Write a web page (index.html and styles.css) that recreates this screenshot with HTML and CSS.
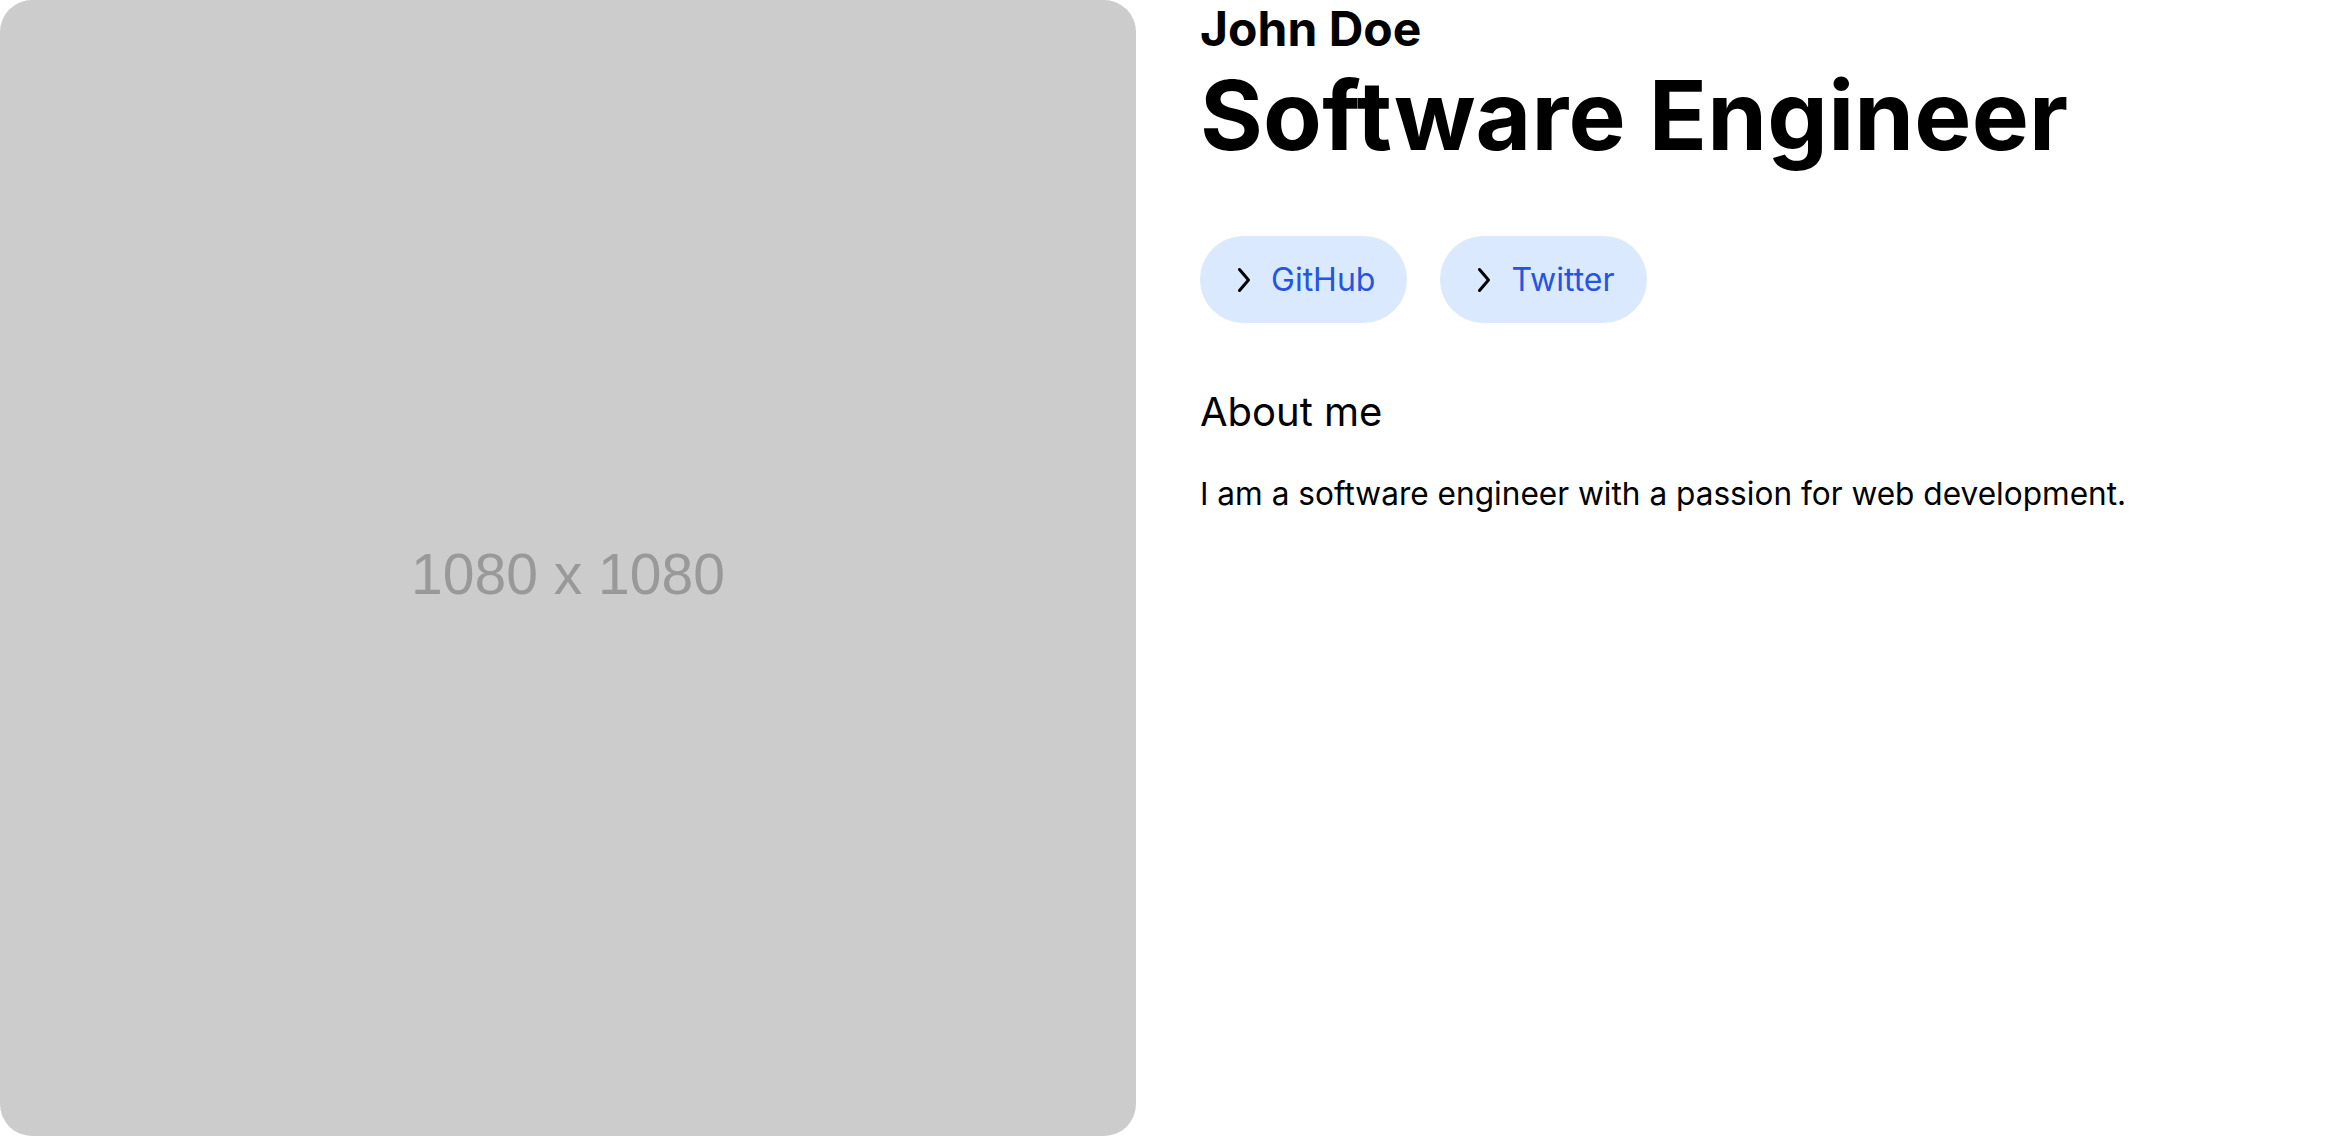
FILE: index.html
```html
<!DOCTYPE html>
<html lang="en">
<head>
<meta charset="utf-8">
<title>John Doe</title>
<link rel="stylesheet" href="styles.css">
</head>
<body>
<main class="page">
  <div class="photo"><span class="photo-label">1080 x 1080</span></div>
  <section class="info">
    <h1 class="name">John Doe</h1>
    <h2 class="title">Software Engineer</h2>
    <nav class="links">
      <a class="pill" href="#">
        <svg class="chev" width="12" height="24" viewBox="0 0 12 24" aria-hidden="true"><polyline points="1.5,1.5 10.5,12 1.5,22.5" fill="none" stroke="#000" stroke-width="3" stroke-linecap="round" stroke-linejoin="round"/></svg>
        <span>GitHub</span>
      </a>
      <a class="pill" href="#">
        <svg class="chev" width="12" height="24" viewBox="0 0 12 24" aria-hidden="true"><polyline points="1.5,1.5 10.5,12 1.5,22.5" fill="none" stroke="#000" stroke-width="3" stroke-linecap="round" stroke-linejoin="round"/></svg>
        <span>Twitter</span>
      </a>
    </nav>
    <h3 class="about-title">About me</h3>
    <p class="about-text">I am a software engineer with a passion for web development.</p>
  </section>
</main>
</body>
</html>
```
FILE: styles.css
```css
html, body {
  margin: 0;
  padding: 0;
  background: #ffffff;
}
body {
  font-family: Inter, "Noto Sans", sans-serif;
  color: #000;
}
.page {
  display: grid;
  grid-template-columns: 1fr 1fr;
  column-gap: 64px;
  align-items: start;
}
.photo {
  aspect-ratio: 1 / 1;
  box-sizing: border-box;
  padding-top: 12px;
  background: #cccccc;
  border-radius: 32px;
  display: flex;
  align-items: center;
  justify-content: center;
}
.photo-label {
  font-family: "Liberation Sans", Arial, sans-serif;
  font-size: 57px;
  color: #999999;
}
.info {
  display: flex;
  flex-direction: column;
  align-items: flex-start;
}
.name {
  margin: 0;
  font-size: 48px;
  line-height: 58px;
  font-weight: 700;
}
.title {
  margin: 9px 0 0;
  font-size: 96px;
  line-height: 96px;
  font-weight: 700;
  letter-spacing: 0.2px;
}
.links {
  display: flex;
  gap: 33px;
  margin-top: 73px;
}
.pill {
  display: flex;
  align-items: center;
  gap: 21px;
  height: 87px;
  box-sizing: border-box;
  padding: 0 32px 0 38px;
  border-radius: 44px;
  background: #dbe9fe;
  color: #2555e0;
  font-size: 32px;
  line-height: 48px;
  text-decoration: none;
}
.chev {
  display: block;
  overflow: visible;
}
.about-title {
  margin: 65px 0 0;
  font-size: 40px;
  line-height: 48px;
  font-weight: 400;
}
.about-text {
  margin: 34px 0 0;
  font-size: 31.6px;
  line-height: 48px;
}
```
